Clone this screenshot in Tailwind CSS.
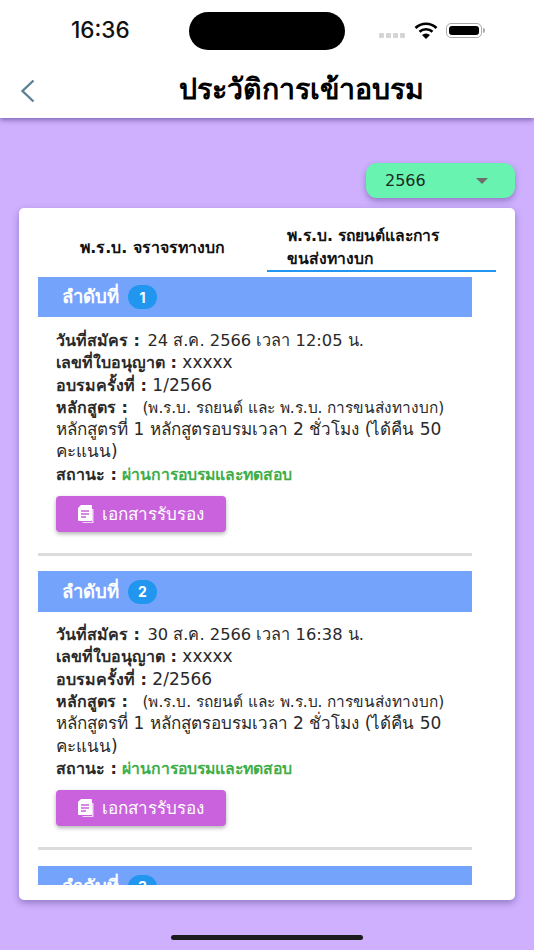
<!DOCTYPE html>
<html lang="th">

<head>
    <meta charset="UTF-8">
    <meta name="viewport" content="width=device-width, initial-scale=1.0">
    <script src="https://cdn.jsdelivr.net/npm/@tailwindcss/browser@4"></script>
    <title>ประวัติการเข้าอบรม</title>
</head>

<body class="w-[534px] h-[950px] overflow-hidden bg-[#ceb0ff] font-['DejaVu_Sans','Noto_Sans',sans-serif] text-[#222]">
    <header class="h-[118px] bg-white shadow-[0_2px_5px_rgba(60,40,110,0.55)] flex flex-col">
        <div class="h-[60px] flex items-center">
            <span class="w-[160px] text-[22.5px] font-medium text-[#111] font-['Inter',sans-serif] pl-[71px]">16:36</span>
            <div class="w-[156px] h-[38px] ml-[29px] mt-[1px] bg-black rounded-full"></div>
            <div class="ml-[34px] flex items-center">
                <div class="flex gap-[2px] mt-[10px]">
                    <span class="w-[5px] h-[5px] rounded-[1px] bg-[#d4d4d4]"></span>
                    <span class="w-[5px] h-[5px] rounded-[1px] bg-[#d4d4d4]"></span>
                    <span class="w-[5px] h-[5px] rounded-[1px] bg-[#d4d4d4]"></span>
                    <span class="w-[5px] h-[5px] rounded-[1px] bg-[#d4d4d4]"></span>
                </div>
                <svg class="ml-[9px]" width="24" height="17" viewBox="0 0 24 17">
                    <path d="M1.5 6 A15 15 0 0 1 22.5 6 M5.5 9.8 A9.5 9.5 0 0 1 18.5 9.8" fill="none" stroke="#000" stroke-width="2.6"/>
                    <path d="M8 13 A6 6 0 0 1 16 13 L12 17 Z" fill="#000"/>
                </svg>
                <div class="ml-[8px] w-[36px] h-[15px] rounded-[5px] border border-[#aaa] p-[2px]">
                    <div class="w-full h-full rounded-[3px] bg-black"></div>
                </div>
                <div class="w-[2px] h-[5px] bg-[#aaa] rounded-r-sm ml-[1px]"></div>
            </div>
        </div>
        <div class="relative flex-1 flex items-center pl-[179px] pt-[2px]">
            <svg class="absolute left-[19px] top-[18px]" width="17" height="26" viewBox="0 0 17 26">
                <path d="M14.5 2.5 L3.5 13 L14.5 23.5" fill="none" stroke="#5b8295" stroke-width="2.4"/>
            </svg>
            <h1 class="text-[28.5px] font-bold text-black leading-[40px]">ประวัติการเข้าอบรม</h1>
        </div>
    </header>

    <main class="px-[19px]">
        <div class="flex justify-end mt-[45px]">
            <div class="w-[149px] h-[35px] rounded-[11px] bg-[#69f3b0] shadow-[0_3px_6px_rgba(60,40,110,0.4)] flex items-center justify-between pl-[19px] pr-[27px]">
                <span class="text-[16px] text-[#1d2a24]">2566</span>
                <span class="w-0 h-0 border-x-[6px] border-x-transparent border-t-[6px] border-t-[#6d6d6d]"></span>
            </div>
        </div>

        <section class="mt-[10px] h-[692px] bg-white rounded-[5px] shadow-[0_3px_7px_rgba(60,40,110,0.4)] pt-[16px]">
            <div class="h-[48px] flex pl-[19px] font-bold text-[#111]">
                <div class="w-[229px] flex items-center justify-center pb-[1px] text-[15.9px]">พ.ร.บ. จราจรทางบก</div>
                <div class="w-[229px] border-b-2 border-[#2196f3] pl-[20px] pt-[1px] leading-[22.5px] text-[15.7px]">พ.ร.บ. รถยนต์และการ<br>ขนส่งทางบก</div>
            </div>

            <div class="mt-[5px] ml-[19px] w-[434px] h-[608px] overflow-hidden">
                <article>
                    <div class="h-[40px] bg-[#73a3fb] flex items-center pl-[24px] gap-[9px] text-white">
                        <span class="text-[18.5px] font-semibold">ลำดับที่</span>
                        <span class="w-[29px] h-[24px] rounded-full bg-[#2196ef] flex items-center justify-center text-[14px] font-bold font-['Inter',sans-serif]">1</span>
                    </div>
                    <div class="mt-[12px] px-[18px] text-[17px] leading-[22.3px] text-[#2a2a2a]">
                        <p><b class="text-[16px] leading-none">วันที่สมัคร :</b> <span class="text-[16.3px] leading-none ml-[2px]">24 ส.ค. 2566 เวลา 12:05 น.</span></p>
                        <p><b class="text-[16px] leading-none">เลขที่ใบอนุญาต :</b> xxxxx</p>
                        <p><b class="text-[16px] leading-none">อบรมครั้งที่ :</b> 1/2566</p>
                        <p><b class="text-[16px] leading-none">หลักสูตร :</b> <span class="text-[15.4px] leading-none ml-[9px]">(พ.ร.บ. รถยนต์ และ พ.ร.บ. การขนส่งทางบก)</span></p>
                        <p>หลักสูตรที่ 1 หลักสูตรอบรมเวลา 2 ชั่วโมง (ได้คืน 50 คะแนน)</p>
                        <p><b class="text-[16px] leading-none">สถานะ :</b> <b class="text-[15.8px] leading-none text-[#3fae49]">ผ่านการอบรมและทดสอบ</b></p>
                    </div>
                    <div class="mt-[11px] ml-[18px] w-[170px] h-[36px] rounded-[4px] bg-[#c962dc] shadow-[0_2px_4px_rgba(0,0,0,0.3)] flex items-center pl-[21px] gap-[8px] text-white text-[17px]">
                        <svg width="17" height="19" viewBox="0 0 17 19">
                            <path d="M15 4 h1.5 v14 h-11 v-1 h9.5 Z" fill="#fff" opacity="0.75"/>
                            <path d="M4 0 h10 a1 1 0 0 1 1 1 v14 a1 1 0 0 1 -1 1 h-12 a1 1 0 0 1 -1 -1 v-12 Z" fill="#fff"/>
                            <path d="M4 6 h8 M4 9 h8 M4 12 h5" stroke="#c962dc" stroke-width="1.3"/>
                        </svg>
                        <span class="pt-[1px]">เอกสารรับรอง</span>
                    </div>
                    <div class="mt-[21px] h-[3px] bg-[#dcdcdc]"></div>
                </article>

                <article class="mt-[15px]">
                    <div class="h-[41px] bg-[#73a3fb] flex items-center pl-[24px] gap-[9px] text-white">
                        <span class="text-[18.5px] font-semibold">ลำดับที่</span>
                        <span class="w-[29px] h-[24px] rounded-full bg-[#2196ef] flex items-center justify-center text-[14px] font-bold font-['Inter',sans-serif]">2</span>
                    </div>
                    <div class="mt-[11px] px-[18px] text-[17px] leading-[22.3px] text-[#2a2a2a]">
                        <p><b class="text-[16px] leading-none">วันที่สมัคร :</b> <span class="text-[16.3px] leading-none ml-[2px]">30 ส.ค. 2566 เวลา 16:38 น.</span></p>
                        <p><b class="text-[16px] leading-none">เลขที่ใบอนุญาต :</b> xxxxx</p>
                        <p><b class="text-[16px] leading-none">อบรมครั้งที่ :</b> 2/2566</p>
                        <p><b class="text-[16px] leading-none">หลักสูตร :</b> <span class="text-[15.4px] leading-none ml-[9px]">(พ.ร.บ. รถยนต์ และ พ.ร.บ. การขนส่งทางบก)</span></p>
                        <p>หลักสูตรที่ 1 หลักสูตรอบรมเวลา 2 ชั่วโมง (ได้คืน 50 คะแนน)</p>
                        <p><b class="text-[16px] leading-none">สถานะ :</b> <b class="text-[15.8px] leading-none text-[#3fae49]">ผ่านการอบรมและทดสอบ</b></p>
                    </div>
                    <div class="mt-[11px] ml-[18px] w-[170px] h-[36px] rounded-[4px] bg-[#c962dc] shadow-[0_2px_4px_rgba(0,0,0,0.3)] flex items-center pl-[21px] gap-[8px] text-white text-[17px]">
                        <svg width="17" height="19" viewBox="0 0 17 19">
                            <path d="M15 4 h1.5 v14 h-11 v-1 h9.5 Z" fill="#fff" opacity="0.75"/>
                            <path d="M4 0 h10 a1 1 0 0 1 1 1 v14 a1 1 0 0 1 -1 1 h-12 a1 1 0 0 1 -1 -1 v-12 Z" fill="#fff"/>
                            <path d="M4 6 h8 M4 9 h8 M4 12 h5" stroke="#c962dc" stroke-width="1.3"/>
                        </svg>
                        <span class="pt-[1px]">เอกสารรับรอง</span>
                    </div>
                    <div class="mt-[21px] h-[3px] bg-[#dcdcdc]"></div>
                </article>

                <article class="mt-[16px]">
                    <div class="h-[41px] bg-[#73a3fb] flex items-center pl-[24px] gap-[9px] text-white">
                        <span class="text-[18.5px] font-semibold">ลำดับที่</span>
                        <span class="w-[29px] h-[24px] rounded-full bg-[#2196ef] flex items-center justify-center text-[14px] font-bold font-['Inter',sans-serif]">3</span>
                    </div>
                </article>
            </div>
        </section>

        <div class="mt-[35px] mx-auto w-[192px] h-[5px] rounded-full bg-[#1c1c1e]"></div>
    </main>
</body>

</html>
